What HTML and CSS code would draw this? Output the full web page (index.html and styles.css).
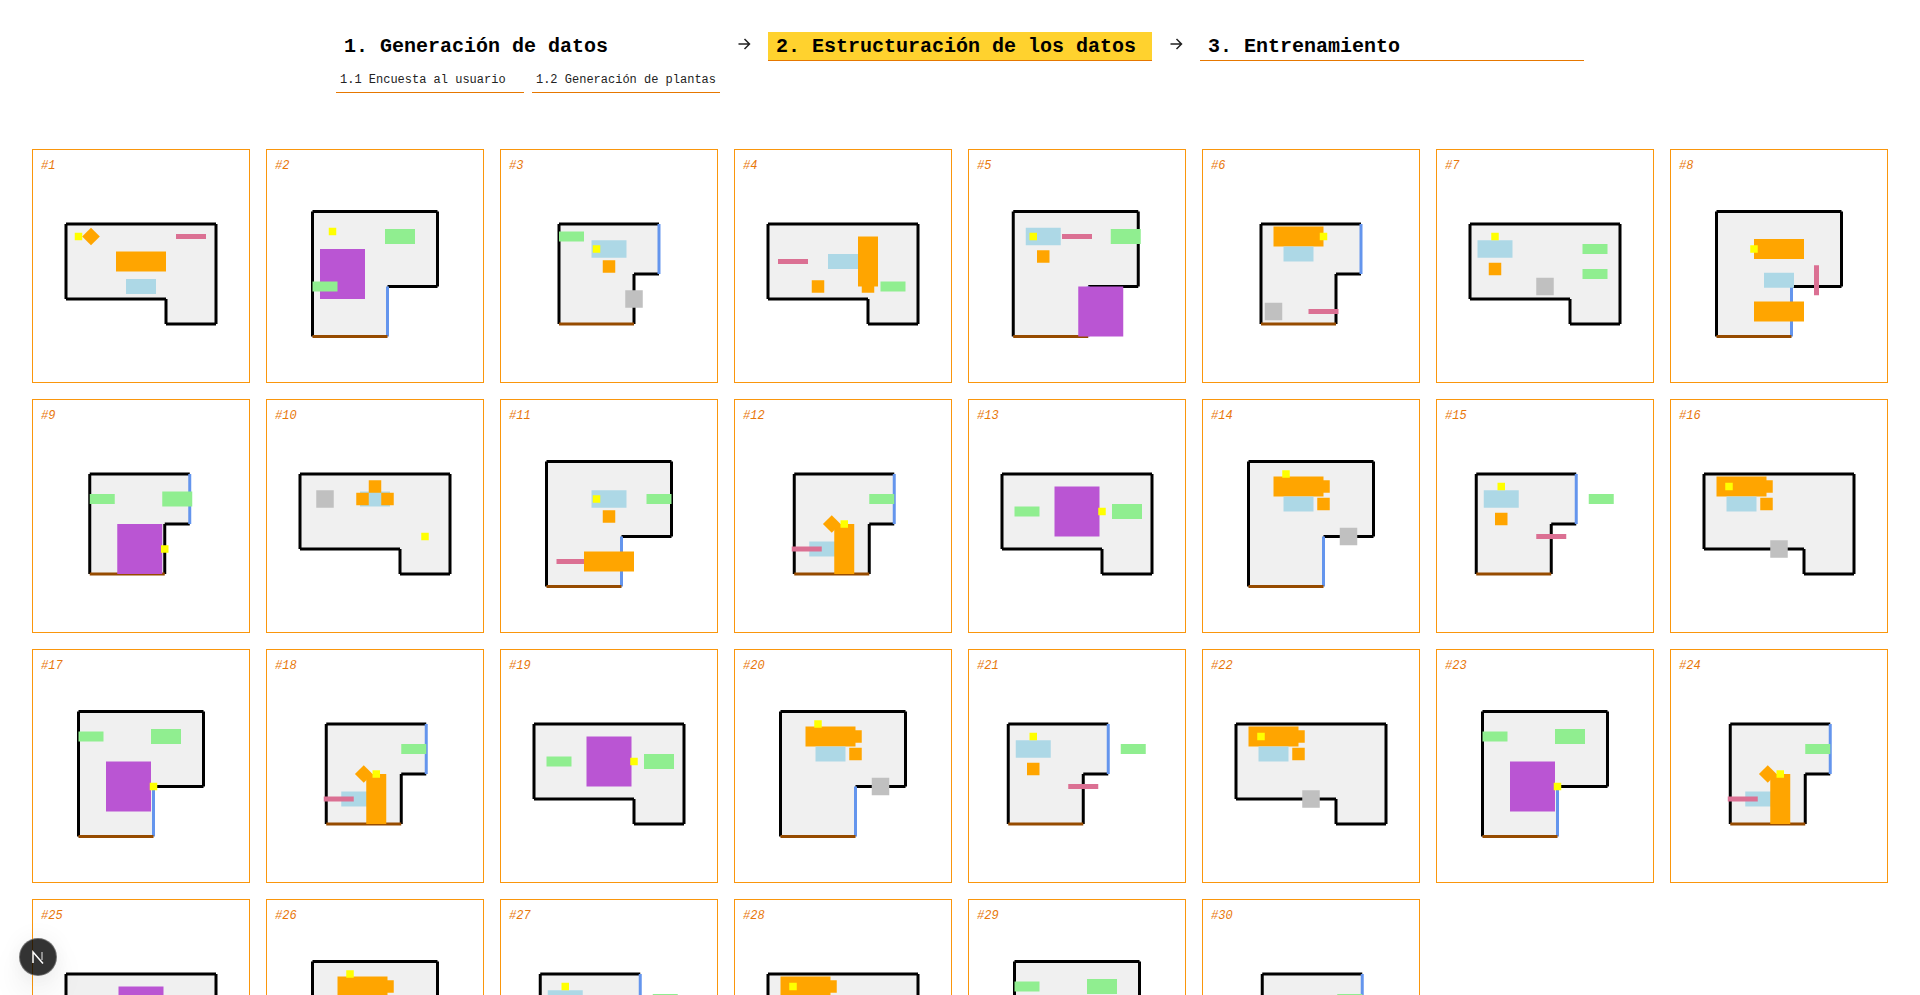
FILE: index.html
```html
<!DOCTYPE html>
<html lang="es">
<head>
<meta charset="utf-8">
<title>Estructuración de los datos</title>
<link rel="stylesheet" href="styles.css">
</head>
<body>
<header class="steps">
  <div class="step">
    <div class="step-title">1. Generación de datos</div>
    <div class="subs">
      <div class="sub">1.1 Encuesta al usuario</div>
      <div class="sub">1.2 Generación de plantas</div>
    </div>
  </div>
  <div class="arrow"><svg class="arrow-icon" viewBox="0 0 16 16"><path d="M2.5 8H13.5M8.5 3L13.5 8L8.5 13"/></svg></div>
  <div class="step">
    <div class="step-title line active">2. Estructuración de los datos</div>
  </div>
  <div class="arrow"><svg class="arrow-icon" viewBox="0 0 16 16"><path d="M2.5 8H13.5M8.5 3L13.5 8L8.5 13"/></svg></div>
  <div class="step">
    <div class="step-title line">3. Entrenamiento</div>
  </div>
</header>

<main class="grid">
  <article class="card"><div class="num">#1</div><svg class="plan" viewBox="0 0 200 200">
    <g id="wa"><polygon class="floor" points="25,50 175,50 175,150 125,150 125,125 25,125"/><path class="wall" d="M25 50H175M175 50V150M175 150H125M125 150V125M125 125H25M25 125V50"/></g>
    <rect class="orange" x="75" y="77.5" width="50" height="20"/><rect class="blue" x="85" y="105" width="30" height="15"/><rect class="pink" x="135" y="60" width="30" height="5"/><rect class="yellow" x="33.75" y="58.75" width="7.5" height="7.5"/><rect class="orange" x="43.75" y="56.25" width="12.5" height="12.5" transform="rotate(45 50 62.5)"/>
  </svg></article>
  <article class="card"><div class="num">#2</div><svg class="plan" viewBox="0 0 200 200">
    <g id="wb"><polygon class="floor" points="37.5,37.5 162.5,37.5 162.5,112.5 112.5,112.5 112.5,162.5 37.5,162.5"/><path class="wall" d="M37.5 37.5H162.5M162.5 37.5V112.5M162.5 112.5H112.5M37.5 162.5V37.5"/><path class="door" d="M112.5 112.5V162.5"/><path class="base" d="M112.5 162.5H37.5"/></g>
    <rect class="yellow" x="53.75" y="53.75" width="7.5" height="7.5"/><rect class="green" x="110" y="55" width="30" height="15"/><rect class="purple" x="45" y="75" width="45" height="50"/><rect class="green" x="37.5" y="107.5" width="25" height="10"/>
  </svg></article>
  <article class="card"><div class="num">#3</div><svg class="plan" viewBox="0 0 200 200">
    <g id="wc"><polygon class="floor" points="50,50 150,50 150,100 125,100 125,150 50,150"/><path class="wall" d="M50 50H150M150 100H125M125 100V150M50 150V50"/><path class="door" d="M150 50V100"/><path class="base" d="M125 150H50"/></g>
    <rect class="green" x="50" y="57.5" width="25" height="10"/><rect class="blue" x="82.5" y="66.25" width="35" height="17.5"/><rect class="yellow" x="83.75" y="71.25" width="7.5" height="7.5"/><rect class="orange" x="93.75" y="86.25" width="12.5" height="12.5"/><rect class="grey" x="116.25" y="116.25" width="17.5" height="17.5"/>
  </svg></article>
  <article class="card"><div class="num">#4</div><svg class="plan" viewBox="0 0 200 200">
    <use href="#wa"/>
    <rect class="pink" x="35" y="85" width="30" height="5"/><rect class="blue" x="85" y="80" width="30" height="15"/><rect class="orange" x="115" y="62.5" width="20" height="50"/><rect class="orange" x="118.75" y="106.25" width="12.5" height="12.5"/><rect class="orange" x="68.75" y="106.25" width="12.5" height="12.5"/><rect class="green" x="137.5" y="107.5" width="25" height="10"/>
  </svg></article>
  <article class="card"><div class="num">#5</div><svg class="plan" viewBox="0 0 200 200">
    <use href="#wb" x="-1.25"/>
    <rect class="pink" x="85" y="60" width="30" height="5"/><rect class="blue" x="48.75" y="53.75" width="35" height="17.5"/><rect class="yellow" x="52.5" y="58.75" width="7.5" height="7.5"/><rect class="green" x="133.75" y="55" width="30" height="15"/><rect class="orange" x="60" y="76.25" width="12.5" height="12.5"/><rect class="purple" x="101.25" y="112.5" width="45" height="50"/>
  </svg></article>
  <article class="card"><div class="num">#6</div><svg class="plan" viewBox="0 0 200 200">
    <use href="#wc"/>
    <rect class="orange" x="62.5" y="52.5" width="50" height="20"/><rect class="blue" x="72.5" y="72.5" width="30" height="15"/><rect class="yellow" x="108.75" y="58.75" width="7.5" height="7.5"/><rect class="grey" x="53.75" y="128.75" width="17.5" height="17.5"/><rect class="pink" x="97.5" y="135" width="30" height="5"/>
  </svg></article>
  <article class="card"><div class="num">#7</div><svg class="plan" viewBox="0 0 200 200">
    <use href="#wa"/>
    <rect class="blue" x="32.5" y="66.25" width="35" height="17.5"/><rect class="yellow" x="46.25" y="58.75" width="7.5" height="7.5"/><rect class="orange" x="43.75" y="88.75" width="12.5" height="12.5"/><rect class="grey" x="91.25" y="103.75" width="17.5" height="17.5"/><rect class="green" x="137.5" y="70" width="25" height="10"/><rect class="green" x="137.5" y="95" width="25" height="10"/>
  </svg></article>
  <article class="card"><div class="num">#8</div><svg class="plan" viewBox="0 0 200 200">
    <use href="#wb"/>
    <rect class="orange" x="75" y="65" width="50" height="20"/><rect class="yellow" x="71.25" y="71.25" width="7.5" height="7.5"/><rect class="blue" x="85" y="98.75" width="30" height="15"/><rect class="pink" x="135" y="91.25" width="5" height="30"/><rect class="orange" x="75" y="127.5" width="50" height="20"/>
  </svg></article>

  <article class="card"><div class="num">#9</div><svg class="plan" viewBox="0 0 200 200">
    <use href="#wc" x="-1.25"/>
    <rect class="green" x="48.75" y="70" width="25" height="10"/><rect class="green" x="121.25" y="67.5" width="30" height="15"/><rect class="purple" x="76.25" y="100" width="45" height="50"/><rect class="yellow" x="120" y="121.25" width="7.5" height="7.5"/>
  </svg></article>
  <article class="card"><div class="num">#10</div><svg class="plan" viewBox="0 0 200 200">
    <use href="#wa"/>
    <rect class="grey" x="41.25" y="66.25" width="17.5" height="17.5"/><rect class="blue" x="85" y="67.5" width="30" height="15"/><rect class="orange" x="93.75" y="56.25" width="12.5" height="12.5"/><rect class="orange" x="81.25" y="68.75" width="12.5" height="12.5"/><rect class="orange" x="106.25" y="68.75" width="12.5" height="12.5"/><rect class="yellow" x="146.25" y="108.75" width="7.5" height="7.5"/>
  </svg></article>
  <article class="card"><div class="num">#11</div><svg class="plan" viewBox="0 0 200 200">
    <use href="#wb"/>
    <rect class="blue" x="82.5" y="66.25" width="35" height="17.5"/><rect class="yellow" x="83.75" y="71.25" width="7.5" height="7.5"/><rect class="orange" x="93.75" y="86.25" width="12.5" height="12.5"/><rect class="green" x="137.5" y="70" width="25" height="10"/><rect class="pink" x="47.5" y="135" width="30" height="5"/><rect class="orange" x="75" y="127.5" width="50" height="20"/>
  </svg></article>
  <article class="card"><div class="num">#12</div><svg class="plan" viewBox="0 0 200 200">
    <g id="p12"><use href="#wc" x="1.25"/><rect class="green" x="126.25" y="70" width="25" height="10"/><rect class="blue" x="66.25" y="117.5" width="30" height="15"/><rect class="orange" x="91.25" y="100" width="20" height="50"/><rect class="orange" x="82.5" y="93.75" width="12.5" height="12.5" transform="rotate(45 88.75 100)"/><rect class="yellow" x="97.5" y="96.25" width="7.5" height="7.5"/><rect class="pink" x="48.75" y="122.5" width="30" height="5"/></g>
  </svg></article>
  <article class="card"><div class="num">#13</div><svg class="plan" viewBox="0 0 200 200">
    <g id="p13"><use href="#wa"/><rect class="green" x="37.5" y="82.5" width="25" height="10"/><rect class="purple" x="77.5" y="62.5" width="45" height="50"/><rect class="yellow" x="121.25" y="83.75" width="7.5" height="7.5"/><rect class="green" x="135" y="80" width="30" height="15"/></g>
  </svg></article>
  <article class="card"><div class="num">#14</div><svg class="plan" viewBox="0 0 200 200">
    <g id="p14"><use href="#wb"/><rect class="orange" x="106.25" y="56.25" width="12.5" height="12.5"/><rect class="orange" x="62.5" y="52.5" width="50" height="20"/><rect class="blue" x="72.5" y="72.5" width="30" height="15"/><rect class="orange" x="106.25" y="73.75" width="12.5" height="12.5"/><rect class="yellow" x="71.25" y="46.25" width="7.5" height="7.5"/><rect class="grey" x="128.75" y="103.75" width="17.5" height="17.5"/></g>
  </svg></article>
  <article class="card"><div class="num">#15</div><svg class="plan" viewBox="0 0 200 200">
    <g id="p15"><use href="#wc" x="-18.75"/><rect class="blue" x="38.75" y="66.25" width="35" height="17.5"/><rect class="yellow" x="52.5" y="58.75" width="7.5" height="7.5"/><rect class="orange" x="50" y="88.75" width="12.5" height="12.5"/><rect class="green" x="143.75" y="70" width="25" height="10"/><rect class="pink" x="91.25" y="110" width="30" height="5"/></g>
  </svg></article>
  <article class="card"><div class="num">#16</div><svg class="plan" viewBox="0 0 200 200">
    <g id="p16"><use href="#wa"/><rect class="orange" x="81.25" y="56.25" width="12.5" height="12.5"/><rect class="orange" x="37.5" y="52.5" width="50" height="20"/><rect class="yellow" x="46.25" y="58.75" width="7.5" height="7.5"/><rect class="blue" x="47.5" y="72.5" width="30" height="15"/><rect class="orange" x="81.25" y="73.75" width="12.5" height="12.5"/><rect class="grey" x="91.25" y="116.25" width="17.5" height="17.5"/></g>
  </svg></article>

  <article class="card"><div class="num">#17</div><svg class="plan" viewBox="0 0 200 200">
    <g id="p17"><use href="#wb"/><rect class="green" x="37.5" y="57.5" width="25" height="10"/><rect class="green" x="110" y="55" width="30" height="15"/><rect class="purple" x="65" y="87.5" width="45" height="50"/><rect class="yellow" x="108.75" y="108.75" width="7.5" height="7.5"/></g>
  </svg></article>
  <article class="card"><div class="num">#18</div><svg class="plan" viewBox="0 0 200 200"><use href="#p12"/></svg></article>
  <article class="card"><div class="num">#19</div><svg class="plan" viewBox="0 0 200 200"><use href="#p13"/></svg></article>
  <article class="card"><div class="num">#20</div><svg class="plan" viewBox="0 0 200 200"><use href="#p14"/></svg></article>
  <article class="card"><div class="num">#21</div><svg class="plan" viewBox="0 0 200 200"><use href="#p15"/></svg></article>
  <article class="card"><div class="num">#22</div><svg class="plan" viewBox="0 0 200 200"><use href="#p16"/></svg></article>
  <article class="card"><div class="num">#23</div><svg class="plan" viewBox="0 0 200 200"><use href="#p17"/></svg></article>
  <article class="card"><div class="num">#24</div><svg class="plan" viewBox="0 0 200 200"><use href="#p12"/></svg></article>

  <article class="card"><div class="num">#25</div><svg class="plan" viewBox="0 0 200 200"><use href="#p13"/></svg></article>
  <article class="card"><div class="num">#26</div><svg class="plan" viewBox="0 0 200 200"><use href="#p14"/></svg></article>
  <article class="card"><div class="num">#27</div><svg class="plan" viewBox="0 0 200 200"><use href="#p15"/></svg></article>
  <article class="card"><div class="num">#28</div><svg class="plan" viewBox="0 0 200 200"><use href="#p16"/></svg></article>
  <article class="card"><div class="num">#29</div><svg class="plan" viewBox="0 0 200 200"><use href="#p17"/></svg></article>
  <article class="card"><div class="num">#30</div><svg class="plan" viewBox="0 0 200 200"><use href="#p12"/></svg></article>
</main>

<div class="dev-badge">
  <svg class="dev-logo" viewBox="0 0 16 16"><path class="dev-n" d="M3 14V3L13 14.5"/><path class="dev-n-fade" d="M12 3V11"/></svg>
</div>
</body>
</html>
```

FILE: styles.css
```css
* { box-sizing: border-box; }
html, body { margin: 0; padding: 0; background: #fff; }
body { font-family: "Liberation Mono", monospace; color: #000; }

.steps {
  display: grid;
  grid-template-columns: 384px 48px 384px 48px 384px;
  justify-content: center;
  padding-top: 32px;
}
.step-title {
  height: 29px;
  padding: 1px 0 0 8px;
  font-size: 20px;
  font-weight: 700;
  line-height: 28px;
}
.step-title.line { border-bottom: 1px solid #e67700; }
.step-title.active { background: #ffd22e; }
.arrow { display: flex; justify-content: center; padding-top: 4px; }
.arrow-icon { width: 16px; height: 16px; }
.arrow-icon path { fill: none; stroke: #222; stroke-width: 1.5; }
.subs { display: flex; gap: 8px; margin-top: 4px; }
.sub {
  flex: 1;
  height: 28px;
  padding: 7px 4px 0;
  font-size: 12px;
  line-height: 16px;
  color: #222;
  white-space: nowrap;
  border-bottom: 1px solid #e67700;
}

.grid {
  display: grid;
  grid-template-columns: repeat(8, 218px);
  gap: 16px;
  padding: 56px 32px 32px;
}
.card {
  height: 234px;
  padding: 8px;
  border: 1px solid #fa960c;
  background: #fff;
}
.num {
  height: 16px;
  font-size: 12px;
  line-height: 16px;
  font-style: italic;
  color: #e8770a;
}
.plan { display: block; width: 200px; height: 200px; }

.floor { fill: #f0f0f0; }
.wall, .door, .base { fill: none; stroke-width: 3; }
.wall { stroke: #000; }
.door { stroke: #6495ed; }
.base { stroke: #964b00; }
.orange { fill: #ffa500; }
.blue { fill: #add8e6; }
.green { fill: #90ee90; }
.purple { fill: #ba55d3; }
.pink { fill: #db7093; }
.grey { fill: #c0c0c0; }
.yellow { fill: #ffff00; }

.dev-badge {
  position: fixed;
  left: 19px;
  bottom: 19px;
  width: 38px;
  height: 38px;
  display: flex;
  align-items: center;
  justify-content: center;
  border-radius: 50%;
  background: rgba(0, 0, 0, 0.8);
  border: 1px solid rgba(255, 255, 255, 0.3);
  box-shadow: 0 16px 32px rgba(0, 0, 0, 0.08), 0 0 24px rgba(0, 0, 0, 0.06);
}
.dev-logo { width: 16px; height: 16px; }
.dev-n { fill: none; stroke: #fff; stroke-width: 1.5; }
.dev-n-fade { fill: none; stroke: rgba(255, 255, 255, 0.6); stroke-width: 1.5; }
```
